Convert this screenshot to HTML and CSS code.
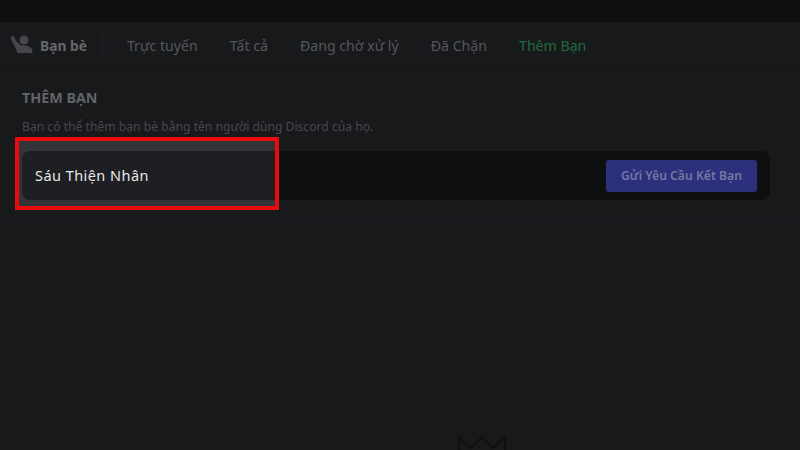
FILE: index.html
```html
<!DOCTYPE html>
<html lang="vi">
<head>
    <meta charset="UTF-8">
    <title>Thêm Bạn</title>
    <link rel="stylesheet" href="styles.css">
</head>
<body>
    <div class="topbar"></div>
    <nav class="tabs">
        <svg class="friends-icon" width="24" height="24" viewBox="0 0 24 24">
            <circle cx="14" cy="7" r="4.6"/>
            <path d="M0.5 4.5C1 3 3 2.5 4 3.5C5 6 6.5 9 9 10.5L11 12.5C14 12 20 12.5 22 16.5C22.6 18 22.5 19.5 22 20H8.5C7.5 20 7 19.5 6.8 18.5C6.5 15.5 2 10 0.5 4.5Z"/>
        </svg>
        <span class="tab-title">Bạn bè</span>
        <span class="tab-divider"></span>
        <span class="tab">Trực tuyến</span>
        <span class="tab">Tất cả</span>
        <span class="tab">Đang chờ xử lý</span>
        <span class="tab">Đã Chặn</span>
        <span class="tab tab-add">Thêm Bạn</span>
    </nav>
    <section class="add-friend">
        <h2 class="add-title">THÊM BẠN</h2>
        <p class="add-desc">Bạn có thể thêm bạn bè bằng tên người dùng Discord của họ.</p>
        <div class="add-form">
            <button class="send-button">Gửi Yêu Cầu Kết Bạn</button>
        </div>
    </section>
    <div class="empty-art">
        <svg width="52" height="20" viewBox="0 0 52 20" fill="none" stroke="#0f1011" stroke-width="2">
            <path d="M3 20V3L15 14L26 3L37 14L49 3V20"/>
        </svg>
    </div>
    <div class="highlight">
        <div class="highlight-input">Sáu Thiện Nhân</div>
    </div>
</body>
</html>
```

FILE: styles.css
```css
body {
    margin: 0;
    width: 800px;
    height: 450px;
    overflow: hidden;
    position: relative;
    background-color: #18191b;
    font-family: "Noto Sans", sans-serif;
}
.topbar {
    height: 22px;
    background-color: #0f1012;
}
.tabs {
    height: 46px;
    display: flex;
    align-items: center;
    padding-left: 10px;
    border-bottom: 1px solid #141517;
    color: #55565b;
    font-size: 14.15px;
}
.friends-icon {
    fill: #45464a;
    margin-right: 6px;
}
.tab-title {
    font-weight: 700;
    color: #66676c;
    font-size: 13.8px;
}
.tab-divider {
    width: 1px;
    height: 24px;
    margin: 0 24px 0 15px;
    background-color: #212226;
}
.tab {
    margin-right: 32px;
}
.tab-add {
    color: #1f6b3c;
}
.add-friend {
    height: 153px;
    margin: 0;
    padding: 0 30px 0 22px;
    border-bottom: 1px solid #1c1d20;
}
.add-title {
    margin: 0;
    padding-top: 19px;
    font-size: 14.3px;
    line-height: 20px;
    font-weight: 700;
    color: #626368;
}
.add-desc {
    margin: 10px 0 16px;
    font-size: 12.15px;
    line-height: 17px;
    color: #47484d;
}
.add-form {
    height: 49px;
    display: flex;
    align-items: center;
    justify-content: flex-end;
    padding-right: 13px;
    border-radius: 8px;
    background-color: #0e0f10;
}
.send-button {
    width: 151px;
    height: 32px;
    padding: 0;
    border: none;
    border-radius: 3px;
    background-color: #2c2f7c;
    color: #7478a2;
    font-family: inherit;
    font-size: 12.2px;
    font-weight: 600;
}
.empty-art {
    display: flex;
    justify-content: center;
    padding: 211px 0 0 163px;
}
.highlight {
    position: absolute;
    left: 15px;
    top: 137px;
    width: 264px;
    height: 73px;
    box-sizing: border-box;
    border: 4px solid #e80a0c;
    background-color: #333438;
    overflow: hidden;
}
.highlight-input {
    position: absolute;
    left: 3px;
    top: 10px;
    width: 300px;
    height: 49px;
    box-sizing: border-box;
    padding-left: 13px;
    border-radius: 8px;
    background-color: #1e1f23;
    color: #e6e7e9;
    font-size: 14.5px;
    font-weight: 400;
    letter-spacing: 0.45px;
    line-height: 49px;
}
```
